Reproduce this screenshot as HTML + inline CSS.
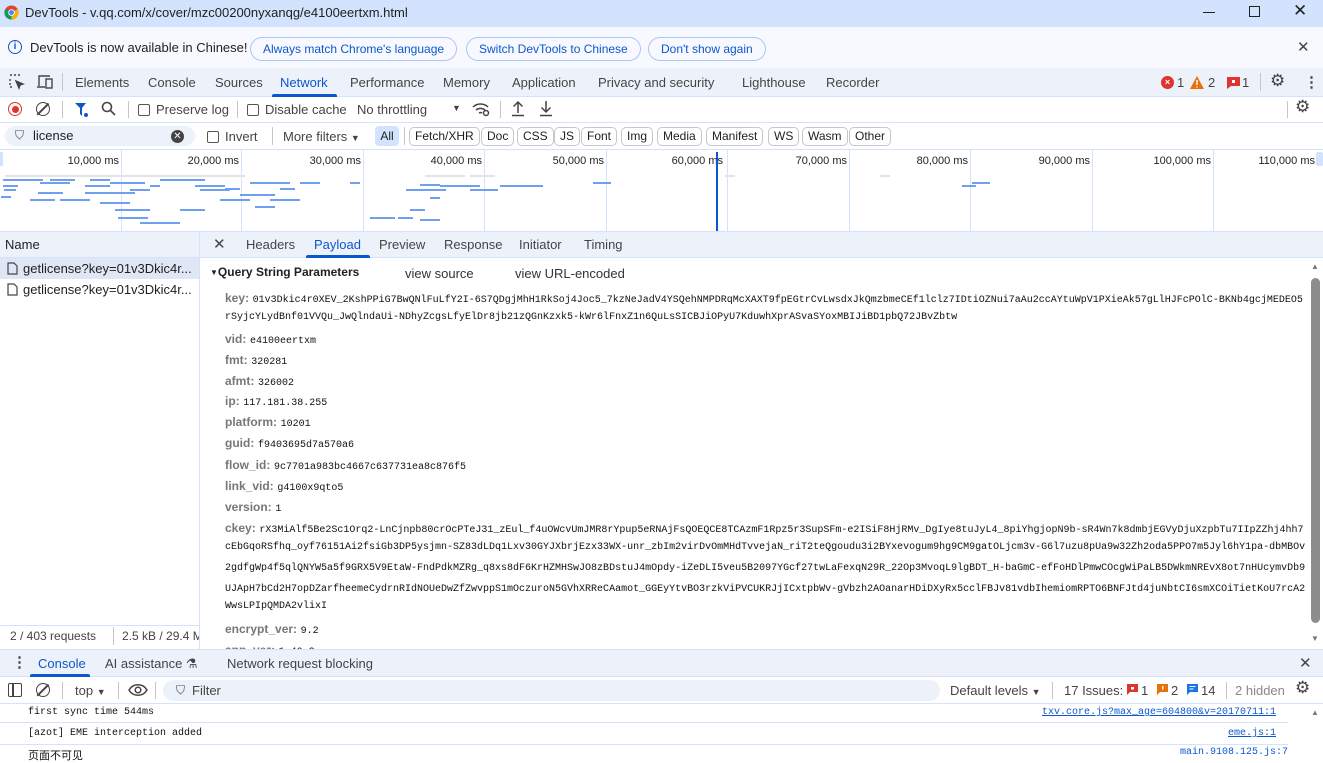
<!DOCTYPE html>
<html><head><meta charset="utf-8">
<style>
*{box-sizing:border-box;margin:0;padding:0}
body{width:1323px;height:753px;overflow:hidden;background:#fff;font-family:"Liberation Sans","Noto Sans CJK SC",sans-serif;font-size:13px;color:#1f1f1f;position:relative}
.a{position:absolute;white-space:nowrap}
.mono{font-family:"Liberation Mono","Noto Sans CJK SC",monospace;font-size:10px;color:#111}
.lbl{color:#777;font-size:12px;font-weight:bold}
.chip{position:absolute;top:127px;height:19px;border:1px solid #c7c7c7;border-radius:5px;font-size:12px;line-height:17px;padding:0 5px;color:#1f1f1f}
.pill{position:absolute;top:37px;height:24px;border:1px solid #a8c7fa;border-radius:12px;color:#0b57d0;font-size:12px;line-height:22px;padding:0 12px}
.hl{position:absolute;height:1px;background:#d3e3fd;left:0;right:0}
.cb{display:inline-block;width:12px;height:12px;border:1px solid #555;border-radius:2px;vertical-align:-2px;margin-right:6px}
</style></head><body>

<div class="a" style="left:0;top:0;width:1323px;height:27px;background:#d3e3fd"></div>
<svg class="a" style="left:4px;top:5px" width="15" height="15" viewBox="0 0 16 16"><circle cx="8" cy="8" r="7.5" fill="#db4437"/><path d="M8 8 L1.5 11.8 A7.5 7.5 0 0 0 8 15.5 Z" fill="#0f9d58"/><path d="M8 8 L14.5 4.2 A7.5 7.5 0 0 1 8 15.5 Z" fill="#f4b400"/><path d="M8 8 L1.5 11.8 A7.5 7.5 0 0 1 1.5 4.2Z" fill="#0f9d58"/><circle cx="8" cy="8" r="3.5" fill="#fff"/><circle cx="8" cy="8" r="2.6" fill="#4285f4"/></svg>
<div class="a" style="left:25px;top:5px;font-size:13px">DevTools - v.qq.com/x/cover/mzc00200nyxanqg/e4100eertxm.html</div>
<div class="a" style="left:1203px;top:12px;width:12px;height:1px;background:#222"></div>
<div class="a" style="left:1249px;top:6px;width:11px;height:11px;border:1px solid #222"></div>
<div class="a" style="left:1293px;top:1px;font-size:17px">✕</div>

<div class="a" style="left:0;top:27px;width:1323px;height:41px;background:#f8f9fe"></div>
<div class="a" style="left:8px;top:40px;width:14px;height:14px;border:1.3px solid #0b57d0;border-radius:50%;color:#0b57d0;font-size:10px;line-height:11px;text-align:center;font-weight:bold">i</div>
<div class="a" style="left:30px;top:40px;font-size:13px">DevTools is now available in Chinese!</div>
<div class="pill" style="left:250px">Always match Chrome's language</div>
<div class="pill" style="left:466px">Switch DevTools to Chinese</div>
<div class="pill" style="left:648px">Don't show again</div>
<div class="a" style="left:1297px;top:38px;font-size:15px;color:#444">✕</div>

<div class="a" style="left:0;top:68px;width:1323px;height:29px;background:#edf2fa;border-bottom:1px solid #d3e3fd"></div>
<svg class="a" style="left:9px;top:74px" width="16" height="16" viewBox="0 0 16 16" fill="none" stroke="#444" stroke-width="1.4"><path d="M1 1h2M5 1h2M9 1h2M1 5v2M1 9v2M1 13h2" /><path d="M7 7l7 3-3 1-1 3z" fill="#444"/></svg>
<svg class="a" style="left:36px;top:74px" width="18" height="16" viewBox="0 0 18 16" fill="none" stroke="#444" stroke-width="1.4"><path d="M3 12V2h11M1 13h8"/><rect x="10" y="5" width="6" height="9"/></svg>
<div class="a" style="left:62px;top:73px;width:1px;height:18px;background:#c4c7c5"></div>
<div class="a" style="left:75px;top:75px;color:#444">Elements</div>
<div class="a" style="left:148px;top:75px;color:#444">Console</div>
<div class="a" style="left:215px;top:75px;color:#444">Sources</div>
<div class="a" style="left:280px;top:75px;color:#0b57d0">Network</div>
<div class="a" style="left:272px;top:94px;width:65px;height:3px;background:#0b57d0;border-radius:2px 2px 0 0"></div>
<div class="a" style="left:350px;top:75px;color:#444">Performance</div>
<div class="a" style="left:443px;top:75px;color:#444">Memory</div>
<div class="a" style="left:512px;top:75px;color:#444">Application</div>
<div class="a" style="left:598px;top:75px;color:#444">Privacy and security</div>
<div class="a" style="left:742px;top:75px;color:#444">Lighthouse</div>
<div class="a" style="left:826px;top:75px;color:#444">Recorder</div>
<div class="a" style="left:1161px;top:76px;width:13px;height:13px;border-radius:50%;background:#dc362e;color:#fff;font-size:9px;line-height:13px;text-align:center;font-weight:bold">×</div>
<div class="a" style="left:1177px;top:75px;color:#444">1</div>
<svg class="a" style="left:1190px;top:76px" width="14" height="13"><path d="M7 0L14 13H0Z" fill="#e8710a"/><path d="M7 4v5M7 10.5v1" stroke="#fff" stroke-width="1.5"/></svg>
<div class="a" style="left:1208px;top:75px;color:#444">2</div>
<svg class="a" style="left:1227px;top:77px" width="13" height="12"><path d="M0 0h13v9H4l-4 3z" fill="#dc362e"/><rect x="5" y="3" width="3" height="3" fill="#fff"/></svg>
<div class="a" style="left:1242px;top:75px;color:#444">1</div>
<div class="a" style="left:1260px;top:73px;width:1px;height:18px;background:#c4c7c5"></div>
<div class="a" style="left:1270px;top:71px;font-size:17px;color:#444">⚙</div>
<div class="a" style="left:1304px;top:73px;font-size:15px;color:#444;font-weight:bold">⋮</div>

<div class="hl" style="top:122px"></div>
<div class="a" style="left:8px;top:102px;width:14px;height:14px;border:1.5px solid #dc362e;border-radius:50%"></div>
<div class="a" style="left:11.5px;top:105.5px;width:7px;height:7px;background:#dc362e;border-radius:50%"></div>
<div class="a" style="left:36px;top:102px;width:14px;height:14px;border:1.5px solid #444;border-radius:50%"></div>
<div class="a" style="left:42px;top:101px;width:1.5px;height:16px;background:#444;transform:rotate(45deg)"></div>
<div class="a" style="left:62px;top:101px;width:1px;height:17px;background:#c4c7c5"></div>
<svg class="a" style="left:74px;top:102px" width="16" height="16"><path d="M1 1h11L8 6v8L6 12V6Z" fill="#0b57d0"/><circle cx="12" cy="13" r="2" fill="#0b57d0"/></svg>
<svg class="a" style="left:101px;top:101px" width="16" height="16" fill="none" stroke="#444" stroke-width="1.6"><circle cx="6" cy="6" r="4.5"/><path d="M9.5 9.5L14 14"/></svg>
<div class="a" style="left:128px;top:101px;width:1px;height:17px;background:#c4c7c5"></div>
<div class="a" style="left:138px;top:102px;color:#444"><span class="cb"></span>Preserve log</div>
<div class="a" style="left:237px;top:101px;width:1px;height:17px;background:#c4c7c5"></div>
<div class="a" style="left:247px;top:102px;color:#444"><span class="cb"></span>Disable cache</div>
<div class="a" style="left:357px;top:102px;color:#444">No throttling</div>
<div class="a" style="left:452px;top:103px;font-size:9px;color:#444">▼</div>
<svg class="a" style="left:472px;top:101px" width="18" height="16" fill="none" stroke="#444" stroke-width="1.5"><path d="M1 6a11 11 0 0 1 15 0M4 9a7 7 0 0 1 9 0M7 12a3 3 0 0 1 3 0"/><circle cx="14" cy="12" r="2.5" fill="#fff"/></svg>
<div class="a" style="left:500px;top:101px;width:1px;height:17px;background:#c4c7c5"></div>
<svg class="a" style="left:511px;top:100px" width="14" height="17" fill="none" stroke="#444" stroke-width="1.5"><path d="M7 13V2M2.5 6.5L7 2l4.5 4.5M1 15.5h12"/></svg>
<svg class="a" style="left:539px;top:100px" width="14" height="17" fill="none" stroke="#444" stroke-width="1.5"><path d="M7 1v11M2.5 7.5L7 12l4.5-4.5M1 15.5h12"/></svg>
<div class="a" style="left:1287px;top:101px;width:1px;height:17px;background:#c4c7c5"></div>
<div class="a" style="left:1295px;top:97px;font-size:17px;color:#444">⚙</div>

<div class="hl" style="top:149px"></div>
<div class="a" style="left:5px;top:126px;width:190px;height:20px;border-radius:10px;background:#edf2fa"></div>
<div class="a" style="left:15px;top:128px;color:#444;font-size:12px">⛉</div>
<div class="a" style="left:33px;top:128px;color:#1f1f1f">license</div>
<div class="a" style="left:171px;top:130px;width:13px;height:13px;border-radius:50%;background:#444;color:#fff;font-size:10px;line-height:13px;text-align:center">✕</div>
<div class="a" style="left:207px;top:129px;color:#444"><span class="cb"></span>Invert</div>
<div class="a" style="left:272px;top:127px;width:1px;height:18px;background:#c4c7c5"></div>
<div class="a" style="left:283px;top:129px;color:#444">More filters <span style="font-size:9px">▼</span></div>
<div class="a" style="left:375px;top:126px;width:24px;height:20px;border-radius:4px;background:#d3e3fd;font-size:12px;line-height:20px;text-align:center">All</div>
<div class="a" style="left:404px;top:127px;width:1px;height:18px;background:#c4c7c5"></div>
<div class="chip" style="left:409px">Fetch/XHR</div>
<div class="chip" style="left:481px">Doc</div>
<div class="chip" style="left:517px">CSS</div>
<div class="chip" style="left:554px">JS</div>
<div class="chip" style="left:581px">Font</div>
<div class="chip" style="left:621px">Img</div>
<div class="chip" style="left:657px">Media</div>
<div class="chip" style="left:706px">Manifest</div>
<div class="chip" style="left:768px">WS</div>
<div class="chip" style="left:802px">Wasm</div>
<div class="chip" style="left:849px">Other</div>

<svg class="a" style="left:0;top:149px" width="1323" height="82">
<g stroke="#d3e3fd"><path d="M121.5 0v82M241.5 0v82M363.5 0v82M484.5 0v82M606.5 0v82M727.5 0v82M849.5 0v82M970.5 0v82M1092.5 0v82M1213.5 0v82"/></g>
<g font-family="Liberation Sans" font-size="11" fill="#1f1f1f" text-anchor="end"><text x="119" y="15">10,000 ms</text><text x="239" y="15">20,000 ms</text><text x="361" y="15">30,000 ms</text><text x="482" y="15">40,000 ms</text><text x="604" y="15">50,000 ms</text><text x="723" y="15">60,000 ms</text><text x="847" y="15">70,000 ms</text><text x="968" y="15">80,000 ms</text><text x="1090" y="15">90,000 ms</text><text x="1211" y="15">100,000 ms</text><text x="1315" y="15">110,000 ms</text></g>
<rect x="716" y="3" width="2" height="79" fill="#0b57d0"/>
<rect x="1316" y="3" width="7" height="14" rx="2" fill="#d3e3fd"/>
<rect x="0" y="3" width="3" height="14" fill="#d3e3fd"/>
<rect x="5" y="26" width="240" height="2" fill="#e3e3e3"/>
<g fill="#6fa0ef">
<rect x="3" y="30" width="40" height="2"/><rect x="50" y="30" width="25" height="2"/><rect x="90" y="30" width="20" height="2"/><rect x="160" y="30" width="45" height="2"/><rect x="3" y="36" width="15" height="2"/><rect x="40" y="33" width="30" height="2"/><rect x="110" y="33" width="35" height="2"/><rect x="4" y="40" width="12" height="2"/><rect x="38" y="43" width="25" height="2"/><rect x="85" y="36" width="25" height="2"/><rect x="130" y="40" width="20" height="2"/><rect x="150" y="36" width="10" height="2"/><rect x="195" y="36" width="30" height="2"/><rect x="225" y="39" width="15" height="2"/><rect x="250" y="33" width="40" height="2"/><rect x="280" y="39" width="15" height="2"/><rect x="30" y="50" width="25" height="2"/><rect x="60" y="50" width="30" height="2"/><rect x="85" y="43" width="50" height="2"/><rect x="100" y="53" width="30" height="2"/><rect x="115" y="60" width="35" height="2"/><rect x="118" y="68" width="30" height="2"/><rect x="140" y="73" width="40" height="2"/><rect x="180" y="60" width="25" height="2"/><rect x="200" y="40" width="30" height="2"/><rect x="300" y="33" width="20" height="2"/><rect x="350" y="33" width="10" height="2"/><rect x="370" y="68" width="25" height="2"/><rect x="398" y="68" width="15" height="2"/><rect x="406" y="40" width="40" height="2"/><rect x="420" y="35" width="20" height="2"/><rect x="430" y="48" width="10" height="2"/><rect x="440" y="36" width="40" height="2"/><rect x="470" y="40" width="25" height="2"/><rect x="410" y="60" width="15" height="2"/><rect x="420" y="70" width="20" height="2"/><rect x="478" y="40" width="20" height="2"/><rect x="500" y="36" width="25" height="2"/><rect x="523" y="36" width="20" height="2"/><rect x="593" y="33" width="18" height="2"/><rect x="240" y="45" width="35" height="2"/><rect x="220" y="50" width="30" height="2"/><rect x="270" y="50" width="30" height="2"/><rect x="1" y="47" width="10" height="2"/><rect x="255" y="57" width="20" height="2"/><rect x="972" y="33" width="18" height="2"/><rect x="962" y="36" width="14" height="2"/></g>
<g fill="#e3e3e3"><rect x="425" y="26" width="40" height="2"/><rect x="470" y="26" width="25" height="2"/><rect x="725" y="26" width="10" height="2"/><rect x="880" y="26" width="10" height="2"/></g>
</svg>

<div class="a" style="left:0;top:231px;width:1323px;height:27px;background:#edf2fa;border-bottom:1px solid #d3e3fd;border-top:1px solid #d3e3fd"></div>
<div class="a" style="left:199px;top:231px;width:1px;height:419px;background:#d3e3fd"></div>
<div class="a" style="left:5px;top:237px;color:#1f1f1f">Name</div>
<div class="a" style="left:0;top:258px;width:199px;height:21px;background:#dfe7f6"></div>
<svg class="a" style="left:7px;top:262px" width="11" height="13" fill="none" stroke="#444" stroke-width="1.2"><path d="M1 1h6l3 3v8H1Z"/></svg>
<div class="a" style="left:23px;top:261px;color:#1f1f1f">getlicense?key=01v3Dkic4r...</div>
<svg class="a" style="left:7px;top:283px" width="11" height="13" fill="none" stroke="#444" stroke-width="1.2"><path d="M1 1h6l3 3v8H1Z"/></svg>
<div class="a" style="left:23px;top:282px;color:#1f1f1f">getlicense?key=01v3Dkic4r...</div>
<div class="a" style="left:0;top:625px;width:199px;height:1px;background:#d3e3fd"></div>
<div class="a" style="left:10px;top:629px;color:#444;font-size:12px">2 / 403 requests</div>
<div class="a" style="left:113px;top:627px;width:1px;height:18px;background:#c4c7c5"></div>
<div class="a" style="left:122px;top:629px;color:#444;font-size:12px;width:77px;overflow:hidden">2.5 kB / 29.4 MB</div>

<div class="a" style="left:213px;top:235px;font-size:15px;color:#444">✕</div>
<div class="a" style="left:246px;top:237px;color:#444">Headers</div>
<div class="a" style="left:314px;top:237px;color:#0b57d0">Payload</div>
<div class="a" style="left:306px;top:255px;width:64px;height:3px;background:#0b57d0;border-radius:2px 2px 0 0"></div>
<div class="a" style="left:379px;top:237px;color:#444">Preview</div>
<div class="a" style="left:444px;top:237px;color:#444">Response</div>
<div class="a" style="left:519px;top:237px;color:#444">Initiator</div>
<div class="a" style="left:584px;top:237px;color:#444">Timing</div>

<div class="a" style="left:210px;top:265px;font-size:12px;font-weight:bold"><span style="font-size:8px;vertical-align:1px">▼</span>Query String Parameters</div>
<div class="a" style="left:405px;top:266px;font-size:13px;color:#333">view source</div>
<div class="a" style="left:515px;top:266px;font-size:13px;color:#333">view URL-encoded</div>

<div class="a" style="left:225px;top:290px"><span class="lbl">key:</span> <span class="mono">01v3Dkic4r0XEV_2KshPPiG7BwQNlFuLfY2I-6S7QDgjMhH1RkSoj4Joc5_7kzNeJadV4YSQehNMPDRqMcXAXT9fpEGtrCvLwsdxJkQmzbmeCEf1lclz7IDtiOZNui7aAu2ccAYtuWpV1PXieAk57gLlHJFcPOlC-BKNb4gcjMEDEO5</span></div>
<div class="a mono" style="left:225px;top:312px">rSyjcYLydBnf01VVQu_JwQlndaUi-NDhyZcgsLfyElDr8jb21zQGnKzxk5-kWr6lFnxZ1n6QuLsSICBJiOPyU7KduwhXprASvaSYoxMBIJiBD1pbQ72JBvZbtw</div>
<div class="a" style="left:225px;top:331px"><span class="lbl">vid:</span> <span class="mono">e4100eertxm</span></div>
<div class="a" style="left:225px;top:352px"><span class="lbl">fmt:</span> <span class="mono">320281</span></div>
<div class="a" style="left:225px;top:373px"><span class="lbl">afmt:</span> <span class="mono">326002</span></div>
<div class="a" style="left:225px;top:393px"><span class="lbl">ip:</span> <span class="mono">117.181.38.255</span></div>
<div class="a" style="left:225px;top:414px"><span class="lbl">platform:</span> <span class="mono">10201</span></div>
<div class="a" style="left:225px;top:435px"><span class="lbl">guid:</span> <span class="mono">f9403695d7a570a6</span></div>
<div class="a" style="left:225px;top:457px"><span class="lbl">flow_id:</span> <span class="mono">9c7701a983bc4667c637731ea8c876f5</span></div>
<div class="a" style="left:225px;top:478px"><span class="lbl">link_vid:</span> <span class="mono">g4100x9qto5</span></div>
<div class="a" style="left:225px;top:499px"><span class="lbl">version:</span> <span class="mono">1</span></div>
<div class="a" style="left:225px;top:520px"><span class="lbl">ckey:</span> <span class="mono">rX3MiAlf5Be2Sc1Orq2-LnCjnpb80crOcPTeJ31_zEul_f4uOWcvUmJMR8rYpup5eRNAjFsQOEQCE8TCAzmF1Rpz5r3SupSFm-e2ISiF8HjRMv_DgIye8tuJyL4_8piYhgjopN9b-sR4Wn7k8dmbjEGVyDjuXzpbTu7IIpZZhj4hh7</span></div>
<div class="a mono" style="left:225px;top:542px">cEbGqoRSfhq_oyf76151Ai2fsiGb3DP5ysjmn-SZ83dLDq1Lxv30GYJXbrjEzx33WX-unr_zbIm2virDvOmMHdTvvejaN_riT2teQgoudu3i2BYxevogum9hg9CM9gatOLjcm3v-G6l7uzu8pUa9w32Zh2oda5PPO7m5Jyl6hY1pa-dbMBOv</div>
<div class="a mono" style="left:225px;top:563px">2gdfgWp4f5qlQNYW5a5f9GRX5V9EtaW-FndPdkMZRg_q8xs8dF6KrHZMHSwJO8zBDstuJ4mOpdy-iZeDLI5veu5B2097YGcf27twLaFexqN29R_22Op3MvoqL9lgBDT_H-baGmC-efFoHDlPmwCOcgWiPaLB5DWkmNREvX8ot7nHUcymvDb9</div>
<div class="a mono" style="left:225px;top:584px">UJApH7bCd2H7opDZarfheemeCydrnRIdNOUeDwZfZwvppS1mOczuroN5GVhXRReCAamot_GGEyYtvBO3rzkViPVCUKRJjICxtpbWv-gVbzh2AOanarHDiDXyRx5cclFBJv81vdbIhemiomRPTO6BNFJtd4juNbtCI6smXCOiTietKoU7rcA2</div>
<div class="a mono" style="left:225px;top:601px">WwsLPIpQMDA2vlixI</div>
<div class="a" style="left:225px;top:621px"><span class="lbl">encrypt_ver:</span> <span class="mono">9.2</span></div>
<div class="a" style="left:225px;top:642px;height:8px;overflow:hidden"><span class="lbl">app_ver:</span> <span class="mono">1.40.2</span></div>
<div class="a" style="left:1311px;top:262px;font-size:8px;color:#777">▲</div>
<div class="a" style="left:1311px;top:278px;width:9px;height:345px;background:#8d8d8d;border-radius:5px"></div>
<div class="a" style="left:1311px;top:634px;font-size:8px;color:#777">▼</div>

<div class="a" style="left:0;top:649px;width:1323px;height:28px;background:#edf2fa;border-top:1px solid #d3e3fd;border-bottom:1px solid #d3e3fd"></div>
<div class="a" style="left:12px;top:653px;font-size:15px;color:#444;font-weight:bold">⋮</div>
<div class="a" style="left:38px;top:656px;color:#0b57d0">Console</div>
<div class="a" style="left:30px;top:674px;width:60px;height:3px;background:#0b57d0;border-radius:2px 2px 0 0"></div>
<div class="a" style="left:105px;top:656px;color:#444">AI assistance ⚗</div>
<div class="a" style="left:227px;top:656px;color:#444">Network request blocking</div>
<div class="a" style="left:1299px;top:654px;font-size:15px;color:#444">✕</div>

<div class="a" style="left:8px;top:683px;width:14px;height:14px;border:1.5px solid #444;border-radius:2px"></div>
<div class="a" style="left:12px;top:683px;width:1.5px;height:14px;background:#444"></div>
<div class="a" style="left:36px;top:683px;width:14px;height:14px;border:1.5px solid #444;border-radius:50%"></div>
<div class="a" style="left:42px;top:682px;width:1.5px;height:16px;background:#444;transform:rotate(45deg)"></div>
<div class="a" style="left:62px;top:682px;width:1px;height:17px;background:#c4c7c5"></div>
<div class="a" style="left:75px;top:683px;color:#444">top <span style="font-size:9px">▼</span></div>
<div class="a" style="left:118px;top:682px;width:1px;height:17px;background:#c4c7c5"></div>
<svg class="a" style="left:128px;top:683px" width="20" height="14" fill="none" stroke="#444" stroke-width="1.5"><path d="M1 7C5 0 15 0 19 7C15 14 5 14 1 7Z"/><circle cx="10" cy="7" r="2.8"/></svg>
<div class="a" style="left:155px;top:682px;width:1px;height:17px;background:#c4c7c5"></div>
<div class="a" style="left:163px;top:680px;width:777px;height:21px;border-radius:11px;background:#edf2fa"></div>
<div class="a" style="left:176px;top:683px;color:#444;font-size:12px">⛉</div>
<div class="a" style="left:192px;top:683px;color:#444">Filter</div>
<div class="a" style="left:950px;top:683px;color:#444">Default levels <span style="font-size:9px">▼</span></div>
<div class="a" style="left:1052px;top:682px;width:1px;height:17px;background:#c4c7c5"></div>
<div class="a" style="left:1064px;top:683px;color:#444">17 Issues:</div>
<svg class="a" style="left:1127px;top:684px" width="11" height="11"><path d="M0 0h11v8H3l-3 3z" fill="#dc362e"/><rect x="4" y="3" width="3" height="2.5" fill="#fff"/></svg>
<div class="a" style="left:1141px;top:683px;color:#444">1</div>
<svg class="a" style="left:1157px;top:684px" width="11" height="11"><path d="M0 0h11v8H3l-3 3z" fill="#e8710a"/><rect x="5" y="2" width="1.5" height="3.5" fill="#fff"/></svg>
<div class="a" style="left:1171px;top:683px;color:#444">2</div>
<svg class="a" style="left:1187px;top:684px" width="11" height="11"><path d="M0 0h11v8H3l-3 3z" fill="#1a73e8"/><path d="M2.5 2.5h6M2.5 5h4" stroke="#fff"/></svg>
<div class="a" style="left:1201px;top:683px;color:#444">14</div>
<div class="a" style="left:1226px;top:682px;width:1px;height:17px;background:#c4c7c5"></div>
<div class="a" style="left:1235px;top:683px;color:#888">2 hidden</div>
<div class="a" style="left:1295px;top:678px;font-size:17px;color:#444">⚙</div>

<div class="hl" style="top:703px"></div>
<div class="a mono" style="left:28px;top:707px">first sync time 544ms</div>
<div class="a mono" style="left:1042px;top:707px;color:#0b57d0;text-decoration:underline">txv.core.js?max_age=604800&amp;v=20170711:1</div>
<div class="a" style="left:0;top:722px;width:1288px;height:1px;background:#d3e3fd"></div>
<div class="a mono" style="left:28px;top:728px">[azot] EME interception added</div>
<div class="a mono" style="left:1228px;top:728px;color:#0b57d0;text-decoration:underline">eme.js:1</div>
<div class="a" style="left:0;top:744px;width:1288px;height:1px;background:#d3e3fd"></div>
<div class="a mono" style="left:28px;top:747px;font-size:11px">页面不可见</div>
<div class="a mono" style="left:1180px;top:747px;color:#0b57d0">main.9108.125.js:7</div>
<div class="a" style="left:1311px;top:708px;font-size:8px;color:#777">▲</div>
</body></html>
